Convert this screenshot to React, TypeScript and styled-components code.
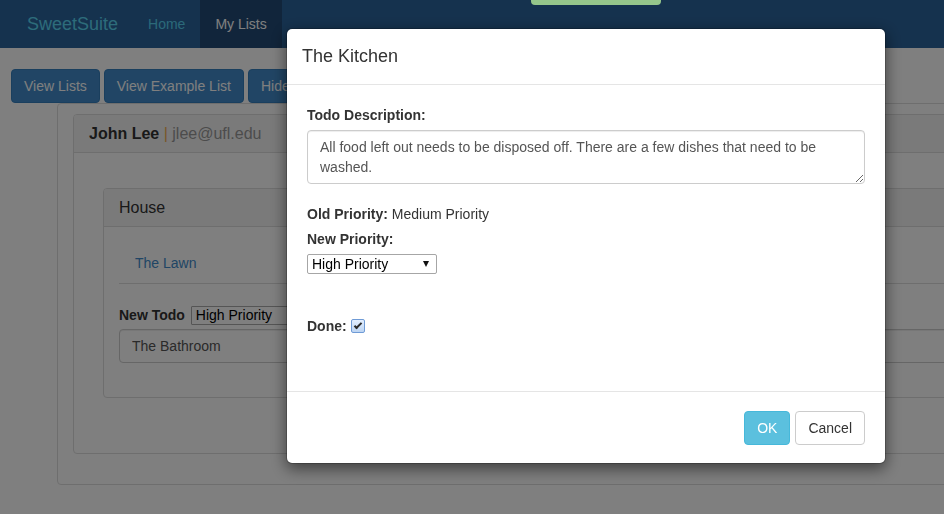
import React from 'react';
import styled, { createGlobalStyle } from 'styled-components';

const FONT = '"Liberation Sans", Arial, Helvetica, sans-serif';

const GlobalStyle = createGlobalStyle`
  html, body { margin: 0; padding: 0; overflow: hidden; background: #fff; }
  body { font-family: ${FONT}; font-size: 14px; line-height: 20px; color: #333; }
  *, *::before, *::after { box-sizing: border-box; }
`;

const Page = styled.div`
  width: 1172px;
  height: 514px;
`;

const Navbar = styled.nav`
  display: flex;
  align-items: stretch;
  height: 48px;
  padding-left: 12px;
  background: #2b649c;
`;

const Brand = styled.a`
  padding: 0 15px;
  font-size: 18px;
  line-height: 48px;
  color: #5ad8f5;
  text-decoration: none;
`;

const NavItem = styled.a<{ $active?: boolean }>`
  padding: 0 15px;
  font-size: 14px;
  line-height: 48px;
  text-decoration: none;
  color: ${(p) => (p.$active ? '#ffffff' : '#56d2f2')};
  background: ${(p) => (p.$active ? '#224a76' : 'transparent')};
`;

const Toolbar = styled.div`
  display: flex;
  gap: 4px;
  padding: 21px 0 0 11px;
`;

const PrimaryButton = styled.button`
  height: 34px;
  padding: 6px 12px;
  font: 14px/20px ${FONT};
  color: #fff;
  background: #428bca;
  border: 1px solid #357ebd;
  border-radius: 4px;
  white-space: nowrap;
`;

const OuterPanel = styled.div`
  margin: 0 57px;
  padding: 10px 15px 30px;
  border: 1px solid #ddd;
  border-radius: 4px;
`;

const Panel = styled.div`
  background: #fff;
  border: 1px solid #ddd;
  border-radius: 4px;
`;

const PanelHeading = styled.div`
  padding: 10px 15px;
  font-size: 16px;
  line-height: 17px;
  color: #333;
  background: #f5f5f5;
  border-bottom: 1px solid #ddd;
  border-radius: 3px 3px 0 0;
`;

const PanelBody = styled.div<{ $pad: string }>`
  padding: ${(p) => p.$pad};
`;

const Separator = styled.span`
  color: #f0ad4e;
`;

const Email = styled.span`
  color: #999;
`;

const ListItem = styled.div`
  padding: 10px 16px;
  border-bottom: 1px solid #ddd;
  color: #428bca;
`;

const TodoRow = styled.div`
  display: flex;
  align-items: center;
  gap: 6px;
  height: 20px;
  margin-top: 21px;
`;

const PageSelect = styled.select`
  appearance: none;
  width: 260px;
  height: 19px;
  padding: 0 4px;
  font: 14px ${FONT};
  color: #000;
  background: #fff;
  border: 1px solid #aaa;
  border-radius: 1px;
`;

const TextInput = styled.input`
  display: block;
  width: 100%;
  height: 34px;
  margin-top: 4px;
  padding: 6px 12px;
  font: 14px/20px ${FONT};
  color: #555;
  background: #fff;
  border: 1px solid #ccc;
  border-radius: 4px;
  box-shadow: inset 0 1px 1px rgba(0, 0, 0, 0.075);
`;

const Backdrop = styled.div`
  position: fixed;
  inset: 0;
  z-index: 10;
  background: rgba(0, 0, 0, 0.5);
`;

const Toast = styled.div`
  position: fixed;
  top: -30px;
  left: 531px;
  z-index: 30;
  width: 130px;
  height: 35px;
  background: #95c68b;
  border-radius: 4px;
`;

const ModalLayer = styled.div`
  position: fixed;
  top: 0;
  left: 0;
  z-index: 20;
  width: 1172px;
`;

const ModalDialog = styled.div`
  width: 600px;
  margin: 28px auto 0;
  background: #fff;
  background-clip: padding-box;
  border: 1px solid rgba(0, 0, 0, 0.2);
  border-radius: 6px;
  box-shadow: 0 5px 15px rgba(0, 0, 0, 0.5);
`;

const ModalHeader = styled.div`
  padding: 14px 15px 15px;
  border-bottom: 1px solid #e5e5e5;
`;

const ModalTitle = styled.h4`
  margin: 0;
  font-size: 18px;
  line-height: 26px;
  font-weight: normal;
  color: #333;
`;

const ModalBody = styled.div`
  padding: 20px;
`;

const FieldLabel = styled.label<{ $gapTop?: number }>`
  display: block;
  margin-top: ${(p) => p.$gapTop ?? 0}px;
  margin-bottom: 5px;
  font-weight: bold;
`;

const TextArea = styled.textarea`
  display: block;
  width: 100%;
  height: 54px;
  padding: 6px 12px;
  font: 14px/20px ${FONT};
  color: #555;
  border: 1px solid #ccc;
  border-radius: 4px;
  box-shadow: inset 0 1px 1px rgba(0, 0, 0, 0.075);
  resize: vertical;
`;

const InfoLine = styled.div`
  margin-top: 20px;
`;

const SelectWrap = styled.span`
  position: relative;
  display: inline-block;

  &::after {
    content: '';
    position: absolute;
    right: 8px;
    top: 7px;
    border-left: 3.5px solid transparent;
    border-right: 3.5px solid transparent;
    border-top: 6px solid #111;
    pointer-events: none;
  }
`;

const PrioritySelect = styled.select`
  display: block;
  appearance: none;
  width: 130px;
  height: 20px;
  padding: 0 0 0 4px;
  font: 14px ${FONT};
  color: #000;
  background: #fff;
  border: 1px solid #a6a6a6;
  border-radius: 2px;
`;

const DoneRow = styled.label`
  display: flex;
  align-items: center;
  gap: 4px;
  margin: 42px 0 35px;
  font-weight: bold;
`;

const CheckBox = styled.input`
  position: relative;
  appearance: none;
  width: 14px;
  height: 14px;
  margin: 0;
  border: 1px solid #6f9bd6;
  border-radius: 2px;
  background: linear-gradient(#e3efff, #bcd4f2);

  &:checked::after {
    content: '';
    position: absolute;
    left: 4px;
    top: 1px;
    width: 4px;
    height: 8px;
    border: solid #2a2a2a;
    border-width: 0 2px 2px 0;
    transform: rotate(45deg);
  }
`;

const ModalFooter = styled.div`
  display: flex;
  justify-content: flex-end;
  gap: 5px;
  padding: 19px 20px 18px;
  border-top: 1px solid #e5e5e5;
`;

const FooterButton = styled.button<{ $variant: 'info' | 'default' }>`
  height: 34px;
  padding: 6px 12px;
  font: 14px/20px ${FONT};
  border-radius: 4px;
  color: ${(p) => (p.$variant === 'info' ? '#fff' : '#333')};
  background: ${(p) => (p.$variant === 'info' ? '#5bc0de' : '#fff')};
  border: 1px solid ${(p) => (p.$variant === 'info' ? '#46b8da' : '#ccc')};
`;

export default function App() {
  return (
    <>
      <GlobalStyle />
      <Page>
        <Navbar>
          <Brand>SweetSuite</Brand>
          <NavItem>Home</NavItem>
          <NavItem $active>My Lists</NavItem>
        </Navbar>
        <Toolbar>
          <PrimaryButton>View Lists</PrimaryButton>
          <PrimaryButton>View Example List</PrimaryButton>
          <PrimaryButton>Hide Example List</PrimaryButton>
        </Toolbar>
        <OuterPanel>
          <Panel>
            <PanelHeading>
              <strong>John Lee</strong> <Separator>|</Separator> <Email>jlee@ufl.edu</Email>
            </PanelHeading>
            <PanelBody $pad="35px 29px 55px">
              <Panel>
                <PanelHeading>House</PanelHeading>
                <PanelBody $pad="16px 15px 34px">
                  <ListItem>The Lawn</ListItem>
                  <TodoRow>
                    <strong>New Todo</strong>
                    <PageSelect defaultValue="high">
                      <option value="high">High Priority</option>
                      <option value="medium">Medium Priority</option>
                      <option value="low">Low Priority</option>
                    </PageSelect>
                  </TodoRow>
                  <TextInput defaultValue="The Bathroom" />
                </PanelBody>
              </Panel>
            </PanelBody>
          </Panel>
        </OuterPanel>
      </Page>

      <Backdrop />
      <Toast />
      <ModalLayer>
        <ModalDialog>
          <ModalHeader>
            <ModalTitle>The Kitchen</ModalTitle>
          </ModalHeader>
          <ModalBody>
            <FieldLabel>Todo Description:</FieldLabel>
            <TextArea defaultValue="All food left out needs to be disposed off. There are a few dishes that need to be washed." />
            <InfoLine>
              <strong>Old Priority:</strong> Medium Priority
            </InfoLine>
            <FieldLabel $gapTop={5}>New Priority:</FieldLabel>
            <SelectWrap>
              <PrioritySelect defaultValue="high">
                <option value="high">High Priority</option>
                <option value="medium">Medium Priority</option>
                <option value="low">Low Priority</option>
              </PrioritySelect>
            </SelectWrap>
            <DoneRow>
              Done:
              <CheckBox type="checkbox" defaultChecked />
            </DoneRow>
          </ModalBody>
          <ModalFooter>
            <FooterButton $variant="info">OK</FooterButton>
            <FooterButton $variant="default">Cancel</FooterButton>
          </ModalFooter>
        </ModalDialog>
      </ModalLayer>
    </>
  );
}
